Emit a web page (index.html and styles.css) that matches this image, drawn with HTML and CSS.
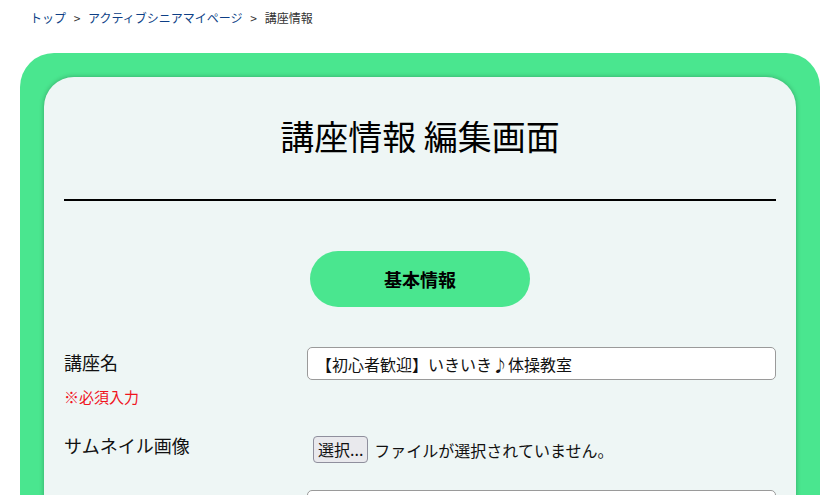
FILE: index.html
```html
<!DOCTYPE html>
<html lang="ja">
<head>
    <meta charset="UTF-8">
    <meta name="viewport" content="width=device-width, initial-scale=1.0">
    <title>講座情報 編集画面</title>
    <link rel="stylesheet" href="styles.css">
</head>
<body>
    <nav class="breadcrumb">
        <a href="#">トップ</a>
        <span class="sep">&gt;</span>
        <a href="#">アクティブシニアマイページ</a>
        <span class="sep">&gt;</span>
        <span class="current">講座情報</span>
    </nav>

    <main class="frame">
        <div class="panel">
            <h1>講座情報 編集画面</h1>
            <hr class="divider">

            <div class="tab-wrap">
                <button class="tab-button" type="button">基本情報</button>
            </div>

            <form class="course-form">
                <div class="form-row">
                    <div class="label-col">
                        <label for="courseName">講座名</label>
                        <p class="required">※必須入力</p>
                    </div>
                    <div class="field-col">
                        <input type="text" id="courseName" class="text-input" value="【初心者歓迎】いきいき♪体操教室">
                    </div>
                </div>

                <div class="form-row file-row">
                    <div class="label-col">
                        <label for="thumb">サムネイル画像</label>
                    </div>
                    <div class="field-col">
                        <label class="file-picker">
                            <input type="file" id="thumb" class="file-hidden">
                            <span class="file-button">選択...</span>
                            <span class="file-name">ファイルが選択されていません。</span>
                        </label>
                    </div>
                </div>

                <!-- next field starts just below the fold -->
                <div class="form-row">
                    <div class="label-col"></div>
                    <div class="field-col">
                        <input type="text" id="nextField" class="text-input" aria-label="講師名" value="">
                    </div>
                </div>
            </form>
        </div>
    </main>
</body>
</html>
```

FILE: styles.css
```css
body {
    margin: 0;
    font-family: "Noto Sans CJK JP", "Noto Sans", sans-serif;
    color: #111;
    background: #fff;
}
.breadcrumb {
    padding: 9px 30px 0;
    font-size: 12px;
    line-height: 18px;
    color: #333;
}
.breadcrumb a {
    color: #0d3f86;
    text-decoration: none;
}
.breadcrumb .sep {
    margin: 0 5px;
}
.frame {
    margin: 26px 15px 0 20px;
    padding: 24px 24px 0;
    background: #4ae68f;
    border-radius: 34px 34px 0 0;
}
.panel {
    background: #eef6f5;
    border-radius: 30px 30px 0 0;
    padding: 38px 20px 40px;
    box-shadow: 0 0 5px rgba(0, 0, 0, 0.28);
}
h1 {
    margin: 0;
    font-size: 34px;
    font-weight: normal;
    line-height: 41px;
    text-align: center;
    color: #000;
}
.divider {
    margin: 43px 0 0;
    border: none;
    border-top: 2px solid #000;
}
.tab-wrap {
    display: flex;
    justify-content: center;
    margin: 50px 0 40px;
}
.tab-button {
    width: 220px;
    height: 56px;
    border: none;
    border-radius: 28px;
    background: #4ae68f;
    color: #000;
    font-family: inherit;
    font-size: 18px;
    font-weight: bold;
    cursor: pointer;
}
.form-row {
    display: grid;
    grid-template-columns: 243px 1fr;
    margin-bottom: 22px;
}
.file-row {
    margin-bottom: 27px;
}
.label-col label {
    display: block;
    padding-top: 2px;
    font-size: 18px;
    line-height: 27px;
    color: #111;
}
.required {
    margin: 10px 0 0;
    font-size: 15px;
    line-height: 22px;
    color: #f0141e;
}
.text-input {
    box-sizing: border-box;
    width: 100%;
    height: 33px;
    padding: 0 8px;
    border: 1px solid #9a9a9a;
    border-radius: 5px;
    background: #fff;
    font-family: inherit;
    font-size: 16px;
    color: #111;
}
.file-picker {
    display: flex;
    align-items: center;
    gap: 6px;
    margin: 6px 0 0 6px;
    font-size: 16px;
    cursor: pointer;
}
.file-hidden {
    display: none;
}
.file-button {
    box-sizing: border-box;
    height: 27px;
    padding: 0 4px;
    line-height: 25px;
    border: 1px solid #8f8f9d;
    border-radius: 4px;
    background: #e9e9ed;
    color: #111;
}
.file-name {
    color: #111;
}
```
